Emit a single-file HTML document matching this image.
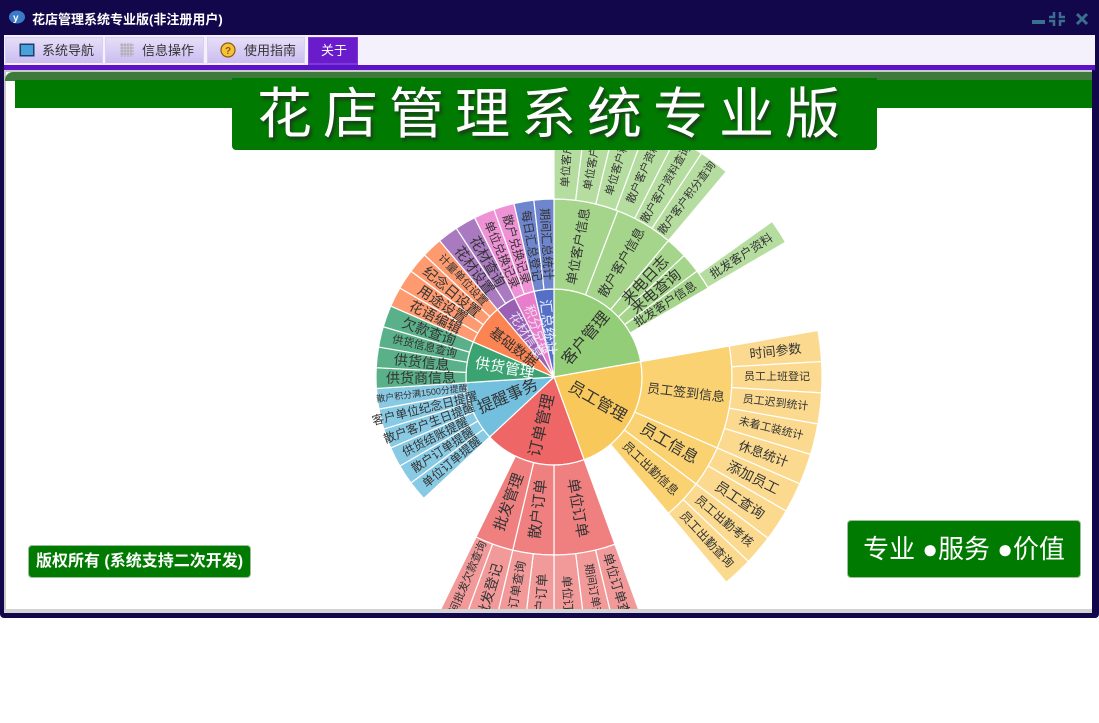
<!DOCTYPE html>
<html><head><meta charset="utf-8">
<style>
*{margin:0;padding:0;box-sizing:border-box}
body{width:1099px;height:723px;background:#fff;position:relative;overflow:hidden;font-family:"Liberation Sans","Noto Sans CJK SC",sans-serif}
#win{position:absolute;left:0;top:0;width:1099px;height:618px;background:#12074a;border-radius:0 0 4px 4px}
#title{position:absolute;left:32px;top:9px;color:#fff;font-weight:bold;font-size:13px}
#tabbar{position:absolute;left:4px;top:35px;width:1091px;height:31px;background:#f4f1fd}
.tab{position:absolute;top:2px;height:28px;background:linear-gradient(#e6def8,#cbbcf0);border:1px solid #d8cff3;border-bottom:2px solid #f4f1fd;font-size:13px;color:#333;line-height:25px}
.tab span{position:absolute;left:36px}
#purple{position:absolute;left:4px;top:65px;width:1091px;height:5px;background:#5b12c9}
#content{position:absolute;left:4px;top:70px;width:1088px;height:543px;background:#fff;border-left:2px solid #c9c9c9;border-bottom:4px solid #d3d3d3;border-top:2px solid #c9c9c9;overflow:hidden}
#dark{position:absolute;left:5px;top:72px;width:1087px;height:9px;background:#3f7a3d;border-radius:8px 0 0 0}
#greenbar{position:absolute;left:15px;top:80px;width:1077px;height:28px;background:#007a00}
#banner{position:absolute;left:232px;top:78px;width:645px;height:72px;background:#007a00;border-radius:0 0 4px 4px;color:#fff;font-size:55px;line-height:72px;letter-spacing:11px;padding-left:25px;text-shadow:2px 3px 3px #1c3a1c;white-space:nowrap}
#copy{position:absolute;left:28px;top:545px;width:223px;height:33px;background:#007a00;border-radius:4px;border:1px solid #9bc09b;color:#fff;font-weight:bold;font-size:16px;line-height:31px;text-align:center;white-space:nowrap}
#pro{position:absolute;left:847px;top:520px;width:234px;height:58px;background:#007a00;border-radius:4px;border:1px solid #9bc09b;color:#fff;font-size:26px;line-height:56px;text-align:center;white-space:nowrap}
#chart{position:absolute;left:0;top:0}
</style></head><body>
<div id="win">
<svg style="position:absolute;left:9px;top:10px" width="16" height="14"><ellipse cx="8" cy="7" rx="8" ry="6.5" fill="#3a7bc8"/><text x="4" y="11" font-size="10" font-weight="bold" fill="#fff">y</text></svg>
<div id="title">花店管理系统专业版(非注册用户)</div>
<svg style="position:absolute;left:1030px;top:10px" width="62" height="18">
<rect x="2" y="10" width="13" height="4" fill="#3b6f90"/>
<path d="M24 2v5h-5M30 2v5h5M24 16v-5h-5M30 16v-5h5" stroke="#3b6f90" stroke-width="2.5" fill="none"/>
<path d="M47 4l10 10M57 4l-10 10" stroke="#3b6f90" stroke-width="3"/>
</svg>
</div>
<div id="tabbar"></div>
<div class="tab" style="left:5px;width:98px;top:37px"><svg style="position:absolute;left:13px;top:5px" width="16" height="14"><rect x="0.5" y="0.5" width="15" height="13" fill="#1b3f6f"/><rect x="2" y="2" width="12" height="10" fill="#4aa0d8"/></svg><span>系统导航</span></div>
<div class="tab" style="left:105px;width:99px;top:37px"><svg style="position:absolute;left:14px;top:5px" width="14" height="14"><path d="M0 2h14M0 5h14M0 8h14M0 11h14M2 0v14M5 0v14M8 0v14M11 0v14" stroke="#aaa" stroke-width="1"/></svg><span>信息操作</span></div>
<div class="tab" style="left:207px;width:98px;top:37px"><svg style="position:absolute;left:12px;top:4px" width="16" height="16"><circle cx="8" cy="8" r="7" fill="#f5c338" stroke="#8a5a10" stroke-width="1.2"/><text x="5" y="12" font-size="10" font-weight="bold" fill="#8a5a10">?</text></svg><span>使用指南</span></div>
<div class="tab" style="left:308px;width:50px;top:37px;background:#6a1ccc;border-color:#7d3ad8;color:#fff"><span style="left:12px">关于</span></div>
<div id="purple"></div>
<div id="content"></div>
<svg id="chart" width="1099" height="723"><defs><clipPath id="cp"><rect x="6" y="108" width="1086" height="501"/></clipPath></defs><g id="g" clip-path="url(#cp)"></g></svg>
<div id="dark"></div>
<div id="greenbar"></div>
<div id="banner">花店管理系统专业版</div>
<div id="copy">版权所有 (系统支持二次开发)</div>
<div id="pro">专业 ●服务 ●价值</div>
<script>
var cx=554,cy=377,R=[[0,88,50],[88,178,133],[178,268,223]];
var C={k:["#93cd77","#a5d58b","#b6dda0"],y:["#f9c85a","#fad272","#fbda8f"],d:["#ee6666","#f08080","#f29a9a"],t:["#73c0de","#88c9e3"],g:["#3ba272","#5ab089"],j:["#fc8452","#fd9a70"],h:["#9a60b4","#aa7ac0"],f:["#ea7ccc","#ee92d5"],z:["#5470c6","#6f86cf"]};
var D=[
[0,80,0,"k","客户管理",16],[80,160,0,"y","员工管理",16],[160,227,0,"d","订单管理",16],[227,266.3,0,"t","提醒事务",16],[266.3,293.5,0,"g","供货管理",15,"#fff"],[293.5,320,0,"j","基础数据",14],[320,333.5,0,"h","花材信息",13,"#e8e0f5"],[333.5,347,0,"f","积分兑换",13,"#f0e0f0"],[347,360,0,"z","汇总统计",14,"#e8ecff"],
[0,21,1,"k","单位客户信息",13],[21,40,1,"k","散户客户信息",13],[40,47,1,"k","来电日志",15],[47,53.5,1,"k","来电查询",15],[53.5,60,1,"k","批发客户信息",12],
[80,113.5,1,"y","员工签到信息",13],[113.5,127,1,"y","员工信息",16],[127,140,1,"y","员工出勤信息",12],
[160,180,1,"d","单位订单",15],[180,193.4,1,"d","散户订单",15],[193.4,206,1,"d","批发管理",15],
[227,233.5,1,"t","单位订单提醒",12],[233.5,240,1,"t","散户订单提醒",12],[240,246.5,1,"t","供货结账提醒",12],[246.5,253,1,"t","散户客户生日提醒",12],[253,259.6,1,"t","客户单位纪念日提醒",12],[259.6,266.3,1,"t","散户积分满1500分提醒",9],
[266.3,273,1,"g","供货商信息",14],[273,279.7,1,"g","供货信息",14],[279.7,286.4,1,"g","供货信息查询",11],[286.4,293.5,1,"g","欠款查询",14],
[293.5,300,1,"j","花语编辑",14],[300,306.5,1,"j","用途设置",14],[306.5,313.3,1,"j","纪念日设置",14],[313.3,320,1,"j","计量单位设置",11],
[320,326.7,1,"h","花材设置",14],[326.7,333.5,1,"h","花材查询",14],[333.5,340.3,1,"f","单位兑换记录",12],[340.3,347,1,"f","散户兑换记录",12],[347,353.5,1,"z","每日汇总登记",12],[353.5,360,1,"z","期间汇总统计",12],
[0,7,2,"k","单位客户查询",11],[7,13.6,2,"k","单位客户资料",11],[13.6,20.3,2,"k","单位客户积分",11],[20.3,27,2,"k","散户客户资料",11],[27,33.4,2,"k","散户客户资料查询",11],[33.4,40,2,"k","散户客户积分查询",11],[54.5,59.8,2,"k","批发客户资料",12],
[80,86.7,2,"y","时间参数",13],[86.7,93.4,2,"y","员工上班登记",11],[93.4,100.1,2,"y","员工迟到统计",11],[100.1,106.8,2,"y","未着工装统计",11],[106.8,113.5,2,"y","休息统计",13],[113.5,120,2,"y","添加员工",14],[120,127,2,"y","员工查询",14],[127,133.5,2,"y","员工出勤考核",12],[133.5,140,2,"y","员工出勤查询",12],
[160,166.5,2,"d","单位订单查询",13],[166.5,173,2,"d","期间订单查询",11],[173,180,2,"d","单位订单",12],[180,186.7,2,"d","散户订单",13],[186.7,193.4,2,"d","散户订单查询",12],[193.4,200.2,2,"d","批发登记",14],[200.2,206,2,"d","期间批发欠款查询",11]
];
function P(r,a){a=a*Math.PI/180;return [cx+r*Math.sin(a),cy-r*Math.cos(a)];}
var s="";
D.forEach(function(d){
 var a0=d[0],a1=d[1],L=d[2],r=R[L],col=C[d[3]][L]||C[d[3]][1];
 var big=(a1-a0)>180?1:0,p1=P(r[1],a0),p2=P(r[1],a1),path;
 if(r[0]==0){path="M"+cx+" "+cy+"L"+p1+"A"+r[1]+" "+r[1]+" 0 "+big+" 1 "+p2+"Z";}
 else{var q1=P(r[0],a1),q2=P(r[0],a0);path="M"+p1+"A"+r[1]+" "+r[1]+" 0 "+big+" 1 "+p2+"L"+q1+"A"+r[0]+" "+r[0]+" 0 "+big+" 0 "+q2+"Z";}
 s+='<path d="'+path+'" fill="'+col+'" stroke="#fff" stroke-width="1.2"/>';
});
D.forEach(function(d){
 var m=(d[0]+d[1])/2,L=d[2],rm=R[L][2],p=P(rm,m),rot=m<180?m-90:m-270;
 s+='<text x="'+p[0]+'" y="'+p[1]+'" transform="rotate('+rot+' '+p[0]+' '+p[1]+')" text-anchor="middle" dominant-baseline="central" font-size="'+d[5]+'" fill="'+(d[6]||"#333")+'" font-family="Liberation Sans,Noto Sans CJK SC,sans-serif">'+d[4]+'</text>';
});
document.getElementById("g").innerHTML=s;
</script>
</body></html>
